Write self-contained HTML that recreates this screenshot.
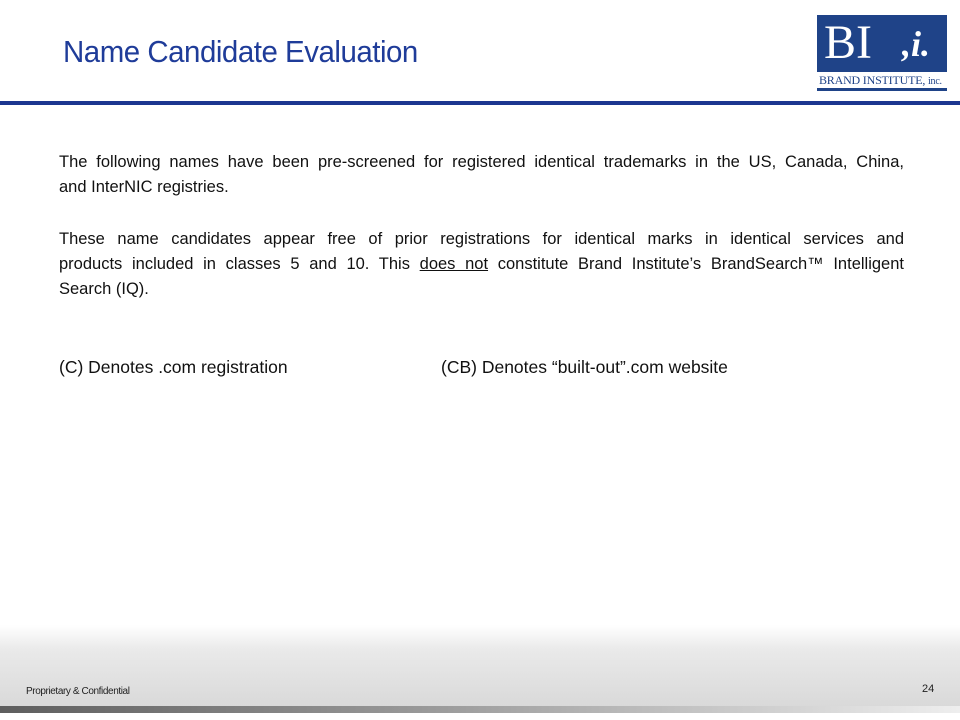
<!DOCTYPE html>
<html><head><style>
html,body{margin:0;padding:0}
body{width:960px;height:720px;position:relative;overflow:hidden;background:#fff;font-family:"Liberation Sans",Arial,sans-serif}
.t{position:absolute;left:63px;top:34px;font-size:31px;color:#1f3c99;letter-spacing:-0.5px;transform:scaleX(0.95);transform-origin:left}
.hl{position:absolute;left:0;top:101px;width:960px;height:4px;background:#1c3690}
.logo{position:absolute;left:817px;top:15px;width:130px;height:57px;background:#1f4388}
.bi{position:absolute;left:7px;top:2px;color:#fff;font-family:"Liberation Serif",serif;font-size:48px;line-height:52px}
.ii{position:absolute;left:85px;top:6px;color:#fff;font-family:"Liberation Serif",serif;font-style:italic;font-weight:bold;font-size:36px;line-height:46px}
.bn{position:absolute;left:819px;top:73px;width:130px;font-family:"Liberation Serif",serif;font-size:12px;color:#1f4388;white-space:nowrap;letter-spacing:-0.2px}
.ub{position:absolute;left:817px;top:88px;width:130px;height:3px;background:#1f4388}
.p{position:absolute;left:59px;width:845px;font-size:16.5px;line-height:25px;color:#111}
.p div.j{text-align:justify;text-align-last:justify;white-space:nowrap}
.foot{position:absolute;left:0;top:625px;width:960px;height:81px;background:linear-gradient(#fff,#eaeaea 30%,#d9d9d9)}
.bar{position:absolute;left:0;top:706px;width:960px;height:7px;background:linear-gradient(90deg,#5e5e5e,#9a9a9a 45%,#eee)}
.fl{position:absolute;left:26px;top:686px;font-size:10px;color:#222;letter-spacing:-0.4px}
.fr{position:absolute;left:922px;top:683px;font-size:11px;color:#222}
</style></head><body>
<div class="t">Name Candidate Evaluation</div>
<div class="logo"><div class="bi">BI</div><div class="ii">,i.</div></div>
<div class="bn">BRAND INSTITUTE, <span style="font-size:10px">inc.</span></div>
<div class="ub"></div>
<div class="hl"></div>
<div class="p" style="top:150px"><div class="j">The following names have been pre-screened for registered identical trademarks in the US, Canada, China,</div><div>and InterNIC registries.</div></div>
<div class="p" style="top:227px"><div class="j">These name candidates appear free of prior registrations for identical marks in identical services and</div><div class="j">products included in classes 5 and 10. This <u>does not</u> constitute Brand Institute’s BrandSearch™ Intelligent</div><div>Search (IQ).</div></div>
<div class="p" style="top:355px;font-size:17.5px">(C) Denotes .com registration</div>
<div class="p" style="top:355px;left:441px;width:450px;font-size:17.5px">(CB) Denotes “built-out”.com website</div>
<div class="foot"></div>
<div class="bar"></div>
<div class="fl">Proprietary &amp; Confidential</div>
<div class="fr">24</div>
</body></html>
